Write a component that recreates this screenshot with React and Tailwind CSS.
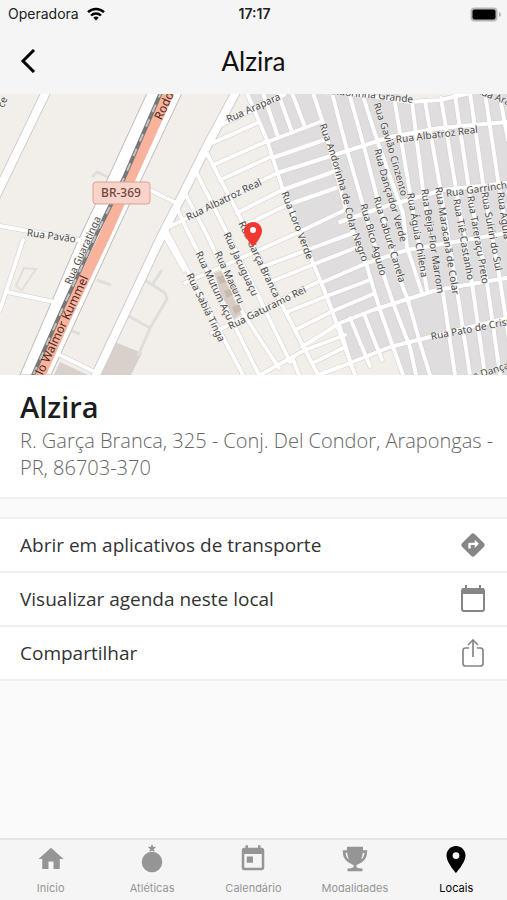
import React from 'react';
import { MdDirections, MdHome, MdToday } from 'react-icons/md';
import { IoMdTrophy } from 'react-icons/io';

// Street geometry, drawn as casing + fill
const STREETS = [
  // left side
  'M0 226 L84 241', 'M23 240 L0 310', 'M7 292 L54 302', 'M150 190 L178 204', 'M60 355 L97 373',
  'M163 233 L184 270',
  // residential, north-south
  'M247 93 L267 140 L282 187 L313 263 L327 297 L355 375',
  'M205 150 L238 213 L278 297 L318 375',
  'M195 170 L228 235 L257 293 L290 362',
  'M183 190 L207 235 L243 313 L279 368',
  'M176 206 L187 230 L259 375',
  'M166 230 L243 375',
  'M263 93 L278 137', 'M278 93 L292 132', 'M292 93 L305 127',
  'M313 93 L323 123 L350 225 L365 260 L380 310 L403 375',
  'M332 93 L347 150 L363 205 L383 273 L393 303 L410 347 L416 375',
  'M349 93 L363 143 L377 197 L400 280 L408 300 L420 343 L430 375',
  'M362 93 L377 140 L403 213 L407 247 L422 293',
  'M394 97 L410 193 L427 290',
  'M412 102 L423 190 L430 232',
  'M443 293 L455 375',
  'M425 101 L440 187 L457 290 L470 375',
  'M441 98 L455 183 L472 283 L485 375',
  'M455 95 L468 183 L487 283 L500 375',
  'M470 93 L483 183 L500 280 L512 360',
  'M485 93 L498 180 L510 250', 'M499 93 L508 140',
  // residential, east-west
  'M217 127 L284 95',
  'M208 145 L257 123', 'M213 165 L265 142', 'M220 180 L270 157',
  'M165 229 L277 173 L350 150 L390 137 L440 128 L507 122',
  'M237 213 L282 190 L333 172', 'M245 225 L287 205 L336 188',
  'M267 142 L320 122', 'M272 158 L324 140',
  'M185 283 L297 233 L345 210',
  'M340 222 L383 207 L443 190 L507 183',
  'M262 267 L307 250 L353 233', 'M270 282 L317 263 L360 246',
  'M323 282 L367 263 L407 250 L507 233',
  'M212 333 L320 281', 'M327 296 L370 280', 'M287 312 L327 296',
  'M333 311 L373 294', 'M295 330 L333 311',
  'M302 347 L340 323 L373 310 L437 290 L507 278',
  'M260 375 L305 350 L345 335', 'M313 363 L345 347', 'M318 375 L340 367 L390 347 L430 337 L507 318',
  'M292 357 L299 375',
  'M350 318 L370 366', 'M364 314 L382 360', 'M340 327 L352 368',
  'M340 92 L410 102 L440 100 L470 93',
];

const WIDE_ROADS = [
  'M47 90 L-6 200',
  'M237 90 L205 150 L180 200 L163 233 L95 377',
];

const FOOTPATHS = [
  'M92 177 L97 172 L110 178', 'M97 280 L111 285', 'M72 331 L80 334',
  'M145 280 L165 293 L167 299 L150 328 L127 315', 'M152 285 L162 270',
  'M150 328 L138 356',
];

const LABELS = [
  { text: 'Rua Arapara', d: 'M227 120 L290 92' },
  { text: 'Rua Andorinha Grande', d: 'M306 89 L380 96 L430 102' },
  { text: 'Rua Albatroz Real', d: 'M187 218 L275 175' },
  { text: 'Rua Albatroz Real', d: 'M396 140 L500 127' },
  { text: 'Rua Garrincha', d: 'M446 194 L530 182' },
  { text: 'Rua Arapara', d: 'M476 90 L550 118' },
  { text: 'Rua Andorinha de Colar Negro', d: 'M322 124 L333 154 L345 195 L352 225 L370 275' },
  { text: 'Rua Gavião Cinzento', d: 'M376 103 L390 145 L408 210' },
  { text: 'Rua Dançador Verde', d: 'M377 149 L385 180 L393 205 L407 255' },
  { text: 'Rua Bico Agudo', d: 'M363 204 L387 290' },
  { text: 'Rua Caburé Canela', d: 'M376 197 L406 295' },
  { text: 'Rua Águia Chilena', d: 'M410 193 L428 300' },
  { text: 'Rua Beija-Flor Marrom', d: 'M424 189 L443 310' },
  { text: 'Rua Maracanã de Colar', d: 'M438 187 L458 310' },
  { text: 'Rua Tiê-Castanho', d: 'M456 199 L474 300' },
  { text: 'Rua Tareraçu Preto', d: 'M470 196 L488 300' },
  { text: 'Rua Suiriri do Sul', d: 'M484 192 L502 290' },
  { text: 'Rua Águia', d: 'M500 192 L510 260' },
  { text: 'Rua Loro Verde', d: 'M284 192 L298 228 L316 275' },
  { text: 'Rua Garça Branca', d: 'M241 222 L284 312' },
  { text: 'Rua Jacuguaçu', d: 'M226 233 L264 315' },
  { text: 'Rua Macuru', d: 'M217 252 L249 320' },
  { text: 'Rua Mutum Açu', d: 'M198 252 L238 337' },
  { text: 'Rua Sabiá Tinga', d: 'M189 274 L231 360' },
  { text: 'Rua Gaturamo Rei', d: 'M229 327 L320 282' },
  { text: 'Rua Pavão', d: 'M27 233 L100 243' },
  { text: 'Rua Guaratinga', d: 'M68 284 L110 191' },
  { text: 'Rua Pato de Cristo', d: 'M431 337 L540 316' },
  { text: 'Rua Dançador', d: 'M461 380 L482 374 L540 355' },
  { text: 'ce', d: 'M1 107 L8 90' },
];

const ACTIONS = [
  { label: 'Abrir em aplicativos de transporte', Icon: DirectionsIcon },
  { label: 'Visualizar agenda neste local', Icon: AgendaIcon },
  { label: 'Compartilhar', Icon: ShareIcon },
];

const TABS = [
  { label: 'Início', Icon: MdHome },
  { label: 'Atléticas', Icon: MedalIcon },
  { label: 'Calendário', Icon: MdToday },
  { label: 'Modalidades', Icon: IoMdTrophy },
  { label: 'Locais', Icon: PlaceIcon, active: true },
];

function DirectionsIcon() {
  return <MdDirections className="w-7 h-7" />;
}

function AgendaIcon() {
  return (
    <svg viewBox="0 0 28 28" className="w-7 h-7" fill="none" stroke="currentColor">
      <rect x="3" y="4" width="22" height="22" rx="2" strokeWidth="2" />
      <path d="M3 6h22" strokeWidth="6" />
      <path d="M7 0v4M21 0v4" strokeWidth="2" />
    </svg>
  );
}

function ShareIcon() {
  return (
    <svg viewBox="0 0 28 28" className="w-7 h-7" fill="none" stroke="currentColor" strokeWidth="1.7">
      <path d="M10 9H6.500a2.500 2.500 0 0 0-2.500 2.500v13a2.500 2.500 0 0 0 2.500 2.500h15a2.500 2.500 0 0 0 2.500-2.500v-13A2.500 2.500 0 0 0 21.500 9H18" />
      <path d="M14 18V1M9 6l5-5 5 5" />
    </svg>
  );
}

function MedalIcon({ className }) {
  return (
    <svg viewBox="0 0 30 30" className={className} fill="currentColor">
      <circle cx="15" cy="18" r="10.300" />
      <path d="M15 0l1.200 2.700 2.900.3-2.200 2 .7 2.900L15 6.400l-2.600 1.500.7-2.900-2.200-2 2.900-.3z" />
    </svg>
  );
}

function PlaceIcon({ className }) {
  return (
    <svg viewBox="0 0 30 30" className={className} fill="currentColor" fillRule="evenodd">
      <path d="M15 2c-5.300 0-9.500 4.200-9.500 9.500C5.500 18.500 15 29 15 29s9.500-10.500 9.500-17.500C24.500 6.200 20.300 2 15 2zm0 6.200a3.400 3.400 0 1 1 0 6.800 3.400 3.400 0 0 1 0-6.800z" />
    </svg>
  );
}

function StatusBar() {
  return (
    <div className="h-7 grid grid-cols-3 items-center pl-2 pr-1.5 font-['Inter',sans-serif] text-sm text-[#222]">
      <div className="flex items-center gap-2">
        <span>Operadora</span>
        <svg viewBox="0 0 18 14" className="w-[18px] h-3.5" fill="none" stroke="#000" strokeWidth="2.400">
          <path d="M1 5.200a11.500 11.500 0 0 1 16 0" />
          <path d="M4 8.500a7.200 7.200 0 0 1 10 0" />
          <path d="M9 13.500L6.300 10.800a4 4 0 0 1 5.400 0z" fill="#000" stroke="none" />
        </svg>
      </div>
      <span className="text-center font-semibold">17:17</span>
      <svg viewBox="0 0 31 15" className="w-[31px] h-[15px] justify-self-end">
        <rect x="0.500" y="0.500" width="27" height="14" rx="4" fill="#b5b5b5" />
        <rect x="2.500" y="2.500" width="23" height="10" rx="2" fill="#000" />
        <path d="M29 5c1.500.5 2 1.500 2 2.500s-.5 2-2 2.500z" fill="#b5b5b5" />
      </svg>
    </div>
  );
}

function StreetMap() {
  return (
    <svg
      viewBox="0 94 507 281"
      preserveAspectRatio="xMidYMid slice"
      className="block w-full h-[281px] bg-[#f2efeb] font-['Noto_Sans',sans-serif]"
      role="img"
      aria-label="Mapa"
    >
      {/* built-up area */}
      <path d="M247 93 L267 140 L282 187 L313 263 L327 297 L345 345 L352 363 L392 350 L401 375 H507 V93 Z" fill="#dfddde" />
      <path d="M396 93 L412 101 L440 98 L466 93 Z" fill="#f2efeb" />
      <path d="M115 342 L142 353 L131 375 H98 Z M60 362 L88 375 H54 Z" fill="#d9d0cc" />
      <path d="M214 273 L224 270 L235 292 L244 312 L234 319 L224 303 Z" fill="#d8cdc4" />
      <path d="M24 268 L36 269 L22 290 L16 286 Z" fill="none" stroke="#e2dfdb" strokeWidth="2" />

      <g fill="none" strokeLinejoin="round">
        {FOOTPATHS.map((d) => <path key={d} d={d} stroke="#e0deda" strokeWidth="3" />)}
        <g stroke="#d0cecc" strokeLinecap="round">
          {STREETS.map((d) => <path key={d} d={d} strokeWidth="5" />)}
          {WIDE_ROADS.map((d) => <path key={d} d={d} strokeWidth="10" />)}
        </g>
        <path d="M147 93 L108 178 L77 243 L20 375 H51 L115 235 L182 93 Z" fill="#fff" stroke="#bbb" />
        <g stroke="#fff" strokeLinecap="round">
          {STREETS.map((d) => <path key={d} d={d} strokeWidth="4" />)}
          {WIDE_ROADS.map((d) => <path key={d} d={d} strokeWidth="8" />)}
        </g>
        <path d="M217 277l6 -2 3 7 -6 2z M224 291l6 -2 3 6 -6 3z M232 307l7 -3 3 6 -7 4z M229 284l5 -2 4 9 -5 2z" fill="#c6b9ae" />

        {/* highway and railway */}
        <path d="M170 90 L133 172 L105 235 L65 319 L38 380" stroke="#f9b29c" strokeWidth="11" />
        <path d="M162 90 L124 178 L97 233 L65 303 L31 380" stroke="#777" strokeWidth="4" />
        <path d="M162 90 L124 178 L97 233 L65 303 L31 380" stroke="#c4c4c4" strokeWidth="2" strokeDasharray="8 8" />
      </g>

      <g fontSize="10" fill="#4a4a4a" stroke="#f5f3f1" strokeWidth="1" paintOrder="stroke">
        {LABELS.map((label, i) => (
          <React.Fragment key={i}>
            <path id={`street-${i}`} d={label.d} fill="none" stroke="none" />
            <text dy="3">
              <textPath href={`#street-${i}`}>{label.text}</textPath>
            </text>
          </React.Fragment>
        ))}
      </g>
      <g fontSize="12" fill="#4d2b24">
        <path id="highway-south" d="M39 374 L66 317 L98 248" fill="none" />
        <path id="highway-north" d="M158 119 L186 59" fill="none" />
        <text dy="4"><textPath href="#highway-south">lo Walmor Kummel</textPath></text>
        <text dy="4"><textPath href="#highway-north">Rodovia</textPath></text>
      </g>

      {/* highway shield */}
      <rect x="93" y="182" width="57" height="22" rx="3" fill="#f7d3c9" stroke="#dfa18f" />
      <text x="121" y="197" textAnchor="middle" fontSize="12" fontWeight="500" fill="#74443c">BR-369</text>

      {/* pin */}
      <path d="M253 222c-5 0-9 4-9 9 0 6 9 16 9 16s9-10 9-16c0-5-4-9-9-9z" fill="#f2382e" />
      <circle cx="253" cy="230" r="3" fill="#fff" />
    </svg>
  );
}

function App() {
  return (
    <div className="min-h-screen flex flex-col bg-[#fafafa] font-['Open_Sans',sans-serif]">
      <header className="bg-[#f5f5f5]">
        <StatusBar />
        <div className="h-[66px] grid grid-cols-[48px_1fr_48px] items-center">
          <button type="button" aria-label="Voltar" className="pl-5 text-black">
            <svg viewBox="0 0 16 24" className="w-4 h-6" fill="none" stroke="currentColor" strokeWidth="3">
              <path d="M14 1L3 12l11 11" />
            </svg>
          </button>
          <h1 className="text-center text-[26px] leading-8 text-[#111] font-['Lato',sans-serif]">Alzira</h1>
        </div>
      </header>

      <main className="flex-1">
        <StreetMap />

        <section className="bg-white pl-5 pr-3 pt-3 pb-4 border-b-2 border-[#f0f0f0]">
          <h2 className="text-[29px] leading-10 font-semibold text-[#1c1c1c]">Alzira</h2>
          <p className="text-xl leading-[27px] font-light text-[#666]">
            R. Garça Branca, 325 - Conj. Del Condor, Arapongas - PR, 86703-370
          </p>
        </section>

        <ul className="mt-[18px] border-t-2 border-[#f0f0f0] bg-white">
          {ACTIONS.map(({ label, Icon }) => (
            <li key={label} className="border-b-2 border-[#f0f0f0]">
              <button type="button" className="w-full h-13 px-5 flex items-center justify-between text-left text-[19px] text-[#333]">
                <span>{label}</span>
                <span className="text-[#868686]"><Icon /></span>
              </button>
            </li>
          ))}
        </ul>
      </main>

      <nav className="h-[62px] grid grid-cols-5 border-t-2 border-[#e6e6e6] bg-[#f5f5f5] font-['Inter',sans-serif]">
        {TABS.map(({ label, Icon, active }) => (
          <a
            key={label}
            href="#"
            aria-current={active ? 'page' : undefined}
            className={`flex flex-col items-center pt-1 gap-1.5 ${active ? 'text-black' : 'text-[#959595]'}`}
          >
            <Icon className="w-[30px] h-[30px]" />
            <span className="text-[11px] leading-4">{label}</span>
          </a>
        ))}
      </nav>
    </div>
  );
}

export default App;
